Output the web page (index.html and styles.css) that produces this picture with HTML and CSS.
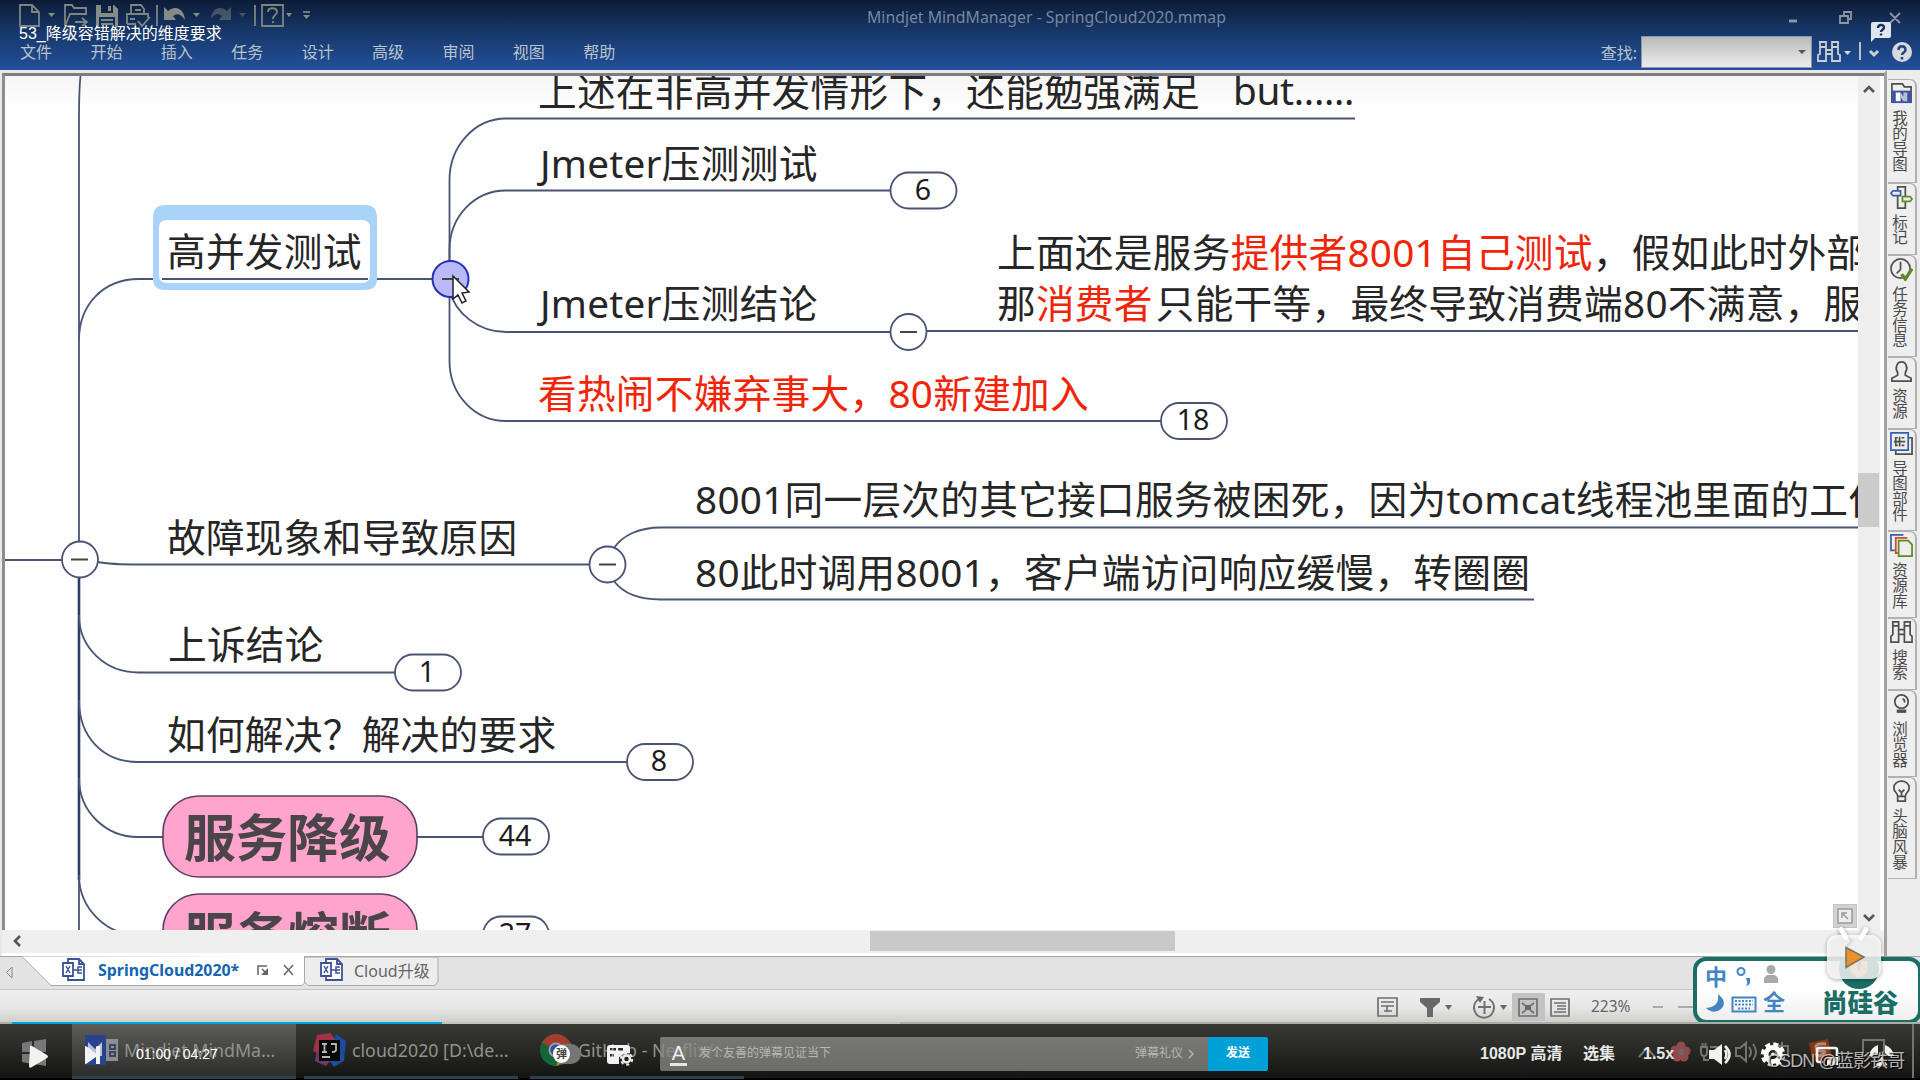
FILE: index.html
```html
<!DOCTYPE html>
<html lang="zh-CN">
<head>
    <meta charset="UTF-8">
    <meta name="viewport" content="width=device-width, initial-scale=1.0">
    <title>53_降级容错解决的维度要求</title>
    <link rel="stylesheet" href="styles.css">
</head>
<body>
<div class="screen">

    <!-- ribbon -->
    <header class="header">
        <div class="quickbar">
            <div class="quick-icons">
                <svg viewBox="18 0 26 30" width="26" height="30"><path d="M20 5h12l7 7v14H20zM32 5v7h7"/></svg>
                <svg viewBox="44 0 16 30" width="16" height="30"><path class="fill" d="M48 13h7l-3.500 4z"/></svg>
                <svg viewBox="60 0 32 30" width="32" height="30"><path d="M65 26V5h7l2 3h12v6M65 26l5-12h17M65 26h9M75 22h10M82 18l5 4-5 4"/></svg>
                <svg viewBox="92 0 30 30" width="30" height="30"><path class="fill" fill-rule="evenodd" d="M96 5h18l4 4v18H96zM101 5v8h12V5zm7 1h3v5h-3zM99 17v10h16V17z"/><path d="M101 20h12M101 24h12"/></svg>
                <svg viewBox="122 0 30 30" width="30" height="30"><path d="M131 14V5h10l3 4v5M127 24V14h21v4M127 24h9M135 10h6M130 19h5M138 21l4 5 8-9"/></svg>
                <svg viewBox="152 0 10 30" width="10" height="30"><path d="M157 5v21"/></svg>
                <svg viewBox="162 0 28 30" width="28" height="30"><path class="fill" d="M164 20V7l4 4c7-6 16-3 17 9-4-6-8-7-12-4l3 4z"/></svg>
                <svg viewBox="190 0 18 30" width="18" height="30"><path class="fill" d="M193 13h7l-3.500 4z"/></svg>
                <svg class="faded" viewBox="208 0 26 30" width="26" height="30"><path class="fill" d="M231 20V7l-4 4c-7-6-15-3-16 8 4-6 8-6 11-3l-3 4z"/></svg>
                <svg class="faded" viewBox="234 0 14 30" width="14" height="30"><path class="fill" d="M239 13h7l-3.500 4z"/></svg>
                <svg viewBox="248 0 12 30" width="12" height="30"><path d="M255 5v21"/></svg>
                <svg viewBox="260 0 26 30" width="26" height="30"><path d="M262 5h21v21h-21zM268 12c0-5 9-5 9 0 0 3-4 3-4 7M273 21v2"/></svg>
                <svg viewBox="286 0 30 30" width="30" height="30"><path class="fill" d="M286 13h6l-3 4zM303 15h7l-3.500 4z"/><path d="M303 12h7"/></svg>
            </div>
            <div class="app-title">Mindjet MindManager - SpringCloud2020.mmap</div>
            <svg class="window-buttons" viewBox="1780 0 140 34" width="140" height="34"><path d="M1789 21h8" stroke-width="3"/><path d="M1840 16h8v7h-8zM1844 16v-4h7v7h-3M1890 13l10 10M1900 13l-10 10"/></svg>
        </div>
        <div class="menubar">
            <nav class="menu">
                <span>文件</span><span>开始</span><span>插入</span><span>任务</span><span>设计</span><span>高级</span><span>审阅</span><span>视图</span><span>帮助</span>
            </nav>
            <div class="search">
                <label>查找:</label>
                <div class="search-box"><i class="caret"></i></div>
                <svg viewBox="1812 34 108 36" width="108" height="36">
                    <path d="M1820 42h6v5h-6zM1832 42h6v5h-6zM1820 47v7l-2 1v6h8V47M1838 47v7l2 1v6h-8V47M1826 50h6M1826 54h6M1860 42v18" />
                    <path class="fill" d="M1844 51h7l-3.500 4z"/>
                    <path d="M1870 51l4 4 4-4" stroke-width="3"/>
                    <circle class="fill" cx="1902" cy="52" r="10"/>
                    <path class="dark" d="M1898.500 50c0-5 7-5 7 0 0 2.500-3.500 2.500-3.500 5M1902 57v2.500"/>
                </svg>
            </div>
        </div>
    </header>

    <main class="workspace">
        <section class="document">
            <div class="map-row">
                <!-- mind map -->
                <svg class="map" viewBox="5 76 1853 854" width="1853" height="854">
                    <g class="link">
                        <path d="M80.500 76Q79 90 79 120V542M5 560H62M79 340C79 305 103 279 139 279H153M377 279H432"/>
                        <path class="trunk" d="M79 577V880"/><path d="M79 880V930"/>
                        <path d="M97 562Q110 564.500 140 564.500H589M79 615C79 648 106 672.500 138 672.500H395"/>
                        <path d="M79 700C79 737 103 762 138 762H627M79 778C79 812 106 837 138 837H163M417 837H483M79 875C79 908 106 935 138 935"/>
                        <path d="M449.500 262V180C449.500 147 474 118.500 506 118.500H1355"/>
                        <path d="M449.500 262V250C449.500 217 474 190.500 506 190.500H890"/>
                        <path d="M449.500 290C455 313 478 332 506 332H890"/>
                        <path d="M449.500 297V361C449.500 394 474 421 506 421H1161"/>
                        <path d="M926 331H1858M614 548C622 536 638 527.500 661 527.500H1858M614 581C622 592 638 599.500 661 599.500H1534"/>
                    </g>

                    <path class="selection" fill-rule="evenodd" d="M165 205H365Q377 205 377 218V279Q377 290 365 290H165Q153 290 153 279V218Q153 205 165 205ZM167 220Q159 220 159 228V275Q159 283 167 283H362Q370 283 370 275V228Q370 220 362 220Z"/>
                    <path class="link" d="M162 279H368"/>

                    <g class="knob">
                        <circle cx="80" cy="559.500" r="18"/><path d="M71 559.500h17"/>
                        <circle cx="607.500" cy="564.500" r="18"/><path d="M599 564.500h17"/>
                        <circle cx="908.500" cy="332" r="18"/><path d="M900 332h17"/>
                        <circle class="hot" cx="450.500" cy="279" r="18"/><path d="M442 279h17"/>
                    </g>

                    <g class="topic">
                        <text x="167" y="266">高并发测试</text>
                        <text x="538" y="106">上述在非高并发情形下，还能勉强满足</text>
                        <text class="tight" x="1233" y="105">but......</text>
                        <text x="540" y="178">Jmeter压测测试</text>
                        <text x="540" y="318">Jmeter压测结论</text>
                        <text class="red" x="538" y="408">看热闹不嫌弃事大，80新建加入</text>
                        <text x="997" y="267">上面还是服务<tspan class="red">提供者8001自己测试</tspan>，假如此时外部</text>
                        <text x="997" y="318">那<tspan class="red">消费者</tspan><tspan dx="3">只能干等，最终导致消费端80不满意，服</tspan></text>
                        <text x="167" y="552">故障现象和导致原因</text>
                        <text x="695" y="514">8001同一层次的其它接口服务被困死，因为tomcat线程池里面的工作</text>
                        <text x="695" y="587">80此时调用8001，客户端访问响应缓慢，转圈圈</text>
                        <text x="168" y="659">上诉结论</text>
                        <text x="167" y="749">如何解决？解决的要求</text>
                    </g>

                    <g class="pink">
                        <rect x="163" y="796" width="254" height="81" rx="36"/>
                        <text x="184" y="857">服务降级</text>
                        <rect x="163" y="894" width="254" height="81" rx="36"/>
                        <text x="184" y="955">服务熔断</text>
                    </g>

                    <g class="count">
                        <rect x="890.500" y="172.500" width="66" height="36" rx="18"/><text x="923" y="200">6</text>
                        <rect x="1161" y="403" width="66" height="36" rx="18"/><text x="1193" y="430">18</text>
                        <rect x="395" y="654.500" width="66" height="36" rx="18"/><text x="427" y="682">1</text>
                        <rect x="627" y="744" width="66" height="36" rx="18"/><text x="659" y="771">8</text>
                        <rect x="483" y="818.500" width="66" height="36" rx="18"/><text x="515" y="846">44</text>
                        <rect x="483" y="916.500" width="66" height="36" rx="18"/><text x="515" y="944">27</text>
                    </g>

                    <path class="cursor" d="M453 276v23l5-4 4 8 4-2-4-8 7-1z"/>
                </svg>
                <div class="vscroll">
                    <svg viewBox="0 0 12 8" width="12" height="8"><path d="M1 7l5-5 5 5"/></svg>
                    <div class="vthumb"></div>
                    <svg viewBox="0 0 12 8" width="12" height="8"><path d="M1 1l5 5 5-5"/></svg>
                </div>
                <div class="corner"><svg viewBox="0 0 22 22" width="22" height="22"><path d="M4 4h14v14H4zM8 13V8h5M8 8l6 6"/></svg></div>
            </div>
            <div class="hscroll">
                <svg viewBox="0 0 8 12" width="8" height="12"><path d="M7 1L2 6l5 5"/></svg>
                <div class="hthumb"></div>
                <svg viewBox="0 0 8 12" width="8" height="12"><path d="M1 1l5 5-5 5"/></svg>
            </div>
        </section>

        <!-- task pane tabs -->
        <aside class="side">
            <div class="side-tab" style="height:104px">
                <svg viewBox="0 0 24 24"><path d="M2 21V2h11l2 3h7v16z"/><path class="blue-fill" d="M2 9h20v13H2z"/><path class="white-fill" d="M6 11h5v9H6z"/><path class="pale-fill" d="M11 11l3 4v-4h4v9h-4l-3-4z"/></svg>
                <span>我的导图</span>
            </div>
            <div class="side-tab" style="height:72px">
                <svg viewBox="0 0 24 24"><path d="M8 1h8v22H8z"/><path class="blue" d="M1 7.500l2-2.500h8v5H3z"/><path class="green" d="M23 13.500l-2-2.500h-8v5h8z"/></svg>
                <span>标记</span>
            </div>
            <div class="side-tab" style="height:102px">
                <svg viewBox="0 0 24 24"><circle cx="11" cy="11" r="10"/><path d="M11 4v8l-4 4"/><path class="green thick" d="M12 17l4 5 7-11"/></svg>
                <span>任务信息</span>
            </div>
            <div class="side-tab" style="height:72px">
                <svg viewBox="0 0 24 24"><path d="M8 13C5 9 7 2 12 2s7 7 4 11v3l6 3v3H2v-3l6-3z"/></svg>
                <span>资源</span>
            </div>
            <div class="side-tab" style="height:102px">
                <svg viewBox="0 0 24 24"><path d="M19 6h4v17H6v-4"/><path class="blue" d="M1 1h18v18H1z"/><path d="M4 10h12M8 6H6v8h2M12 6h3M12 14h3M10 5v10"/></svg>
                <span>导图部件</span>
            </div>
            <div class="side-tab" style="height:87px">
                <svg viewBox="0 0 24 24"><path class="blue" d="M14 1H1v16h4"/><path class="orange" d="M18 4H6v16h3"/><path class="green" d="M9 7h10l4 4v12H9z"/></svg>
                <span>资源库</span>
            </div>
            <div class="side-tab" style="height:72px">
                <svg viewBox="0 0 24 24"><path d="M3 1h6v4H3zM15 1h6v4h-6zM3 5v9l-2 2v6h8V5M21 5v9l2 2v6h-8V5M9 9h6M9 14h6"/></svg>
                <span>搜索</span>
            </div>
            <div class="side-tab" style="height:87px">
                <svg viewBox="0 0 24 24"><circle cx="12" cy="9" r="7"/><path d="M13 6q3 1 2 4"/><path class="thick" d="M7 19h10"/></svg>
                <span>浏览器</span>
            </div>
            <div class="side-tab" style="height:102px">
                <svg viewBox="0 0 24 24"><path d="M8 17c0-4-4-4-4-9 0-9 16-9 16 0 0 5-4 5-4 9zM8 17v5h8v-5M9 10l3 3 3-3M12 13v4"/></svg>
                <span>头脑风暴</span>
            </div>
        </aside>
    </main>

    <div class="doc-tabs">
        <svg class="tabs-shape" viewBox="0 956 440 34" width="440" height="34">
            <path class="tab-on" d="M22 956.500L51 985.500H302L304.500 983V956"/>
            <path class="tab-off" d="M304.500 957V982L308 985.500H435L438 982V957z"/>
            <path class="tab-arrow" d="M12 967v11l-5.500-5.500z"/>
            <path class="tab-tools" d="M258 975v-9h9M262 969l5 5M284 965l9 10M293 965l-9 10"/><path class="tool-fill" d="M268 968v7h-7z"/>
        </svg>
        <div class="tab-list">
            <div class="tab active"><svg viewBox="0 0 23 23" width="23" height="23"><path d="M6 5V1h11l5 5v16H6v-4M17 1v5h5M1 5h10v13H1z"/><path class="thin" d="M4 8l4 7M8 8l-4 7M11 12h5M20 9h-4v6h4M16 12h4"/></svg><span>SpringCloud2020*</span></div>
            <div class="tab"><svg viewBox="0 0 23 23" width="23" height="23"><path d="M6 5V1h11l5 5v16H6v-4M17 1v5h5M1 5h10v13H1z"/><path class="thin" d="M4 8l4 7M8 8l-4 7M11 12h5M20 9h-4v6h4M16 12h4"/></svg><span>Cloud升级</span></div>
        </div>
    </div>

    <div class="status">
        <svg viewBox="1370 991 210 32" width="210" height="32">
            <path class="pressed" d="M1512 993h33v28h-33z"/>
            <path d="M1378 998h19v18h-19zM1381 1002h13M1381 1006h6v6M1387 1006h7M1384 1011h8"/>
            <path class="fill" d="M1420 998h20v4l-7 6v9h-6v-9l-7-6zM1445 1005h7l-3.500 5zM1500 1005h7l-3.500 5z"/>
            <path d="M1489 999A10 10 0 1 1 1479 999M1478 1007h13M1484.500 1001v13" stroke-width="2"/>
            <path class="fill" d="M1476 996l8 1-4 6z"/>
            <path d="M1519 999h18v17h-18zM1522 1003l4 3M1534 1003l-4 3M1522 1013l4-3M1534 1013l-4-3"/><path class="fill" d="M1525 1005h6v5h-6z"/>
            <path d="M1551 999h18v17h-18zM1554 1003h12M1557 1006h9M1557 1009h9M1554 1012h12"/>
        </svg>
        <span class="zoom">223%</span>
        <i class="dash"></i><i class="track"></i>
    </div>

    <!-- desktop taskbar -->
    <div class="taskbar">
        <svg class="start" viewBox="0 1024 72 54" width="72" height="54"><path d="M22 1043l10-2v11H22zM34 1041l12-2v13H34zM22 1054h10v10l-10-2zM34 1054h12v12l-12-2z"/></svg>
        <div class="task current"><svg viewBox="0 0 34 34" width="34" height="34"><path fill="#26438c" d="M0 2h21v30H0z"/><path fill="#8b8e94" d="M21 6h12v22H21z"/><path stroke="#39445d" stroke-width="2" fill="none" d="M25 12h5v4h-5zM25 19h5v4h-5z"/><path fill="#b7c0d6" d="M3 23V9l7 7 7-7v14h-4v-6l-3 3-3-3v6z"/></svg><span>Mindjet MindMa...</span></div>
        <div class="task"><svg viewBox="0 0 34 34" width="34" height="34"><path fill="#a03345" d="M4 2l13-2 7 8-12 17L0 18z"/><path fill="#1e4b9c" d="M23 1l10 7-2 20-10 6-6-8z"/><path fill="#713768" d="M4 18l-2 10 11 5 7-8z"/><path fill="#080808" d="M6 7h21v21H6z"/><path stroke="#b5b5b5" stroke-width="1.800" fill="none" d="M9 11h5M11.500 11v8M9 19h5M18 11h5v6q0 2-4 2M9 24h8"/></svg><span>cloud2020 [D:\de...</span></div>
        <div class="task"><svg viewBox="0 0 36 36" width="34" height="34"><circle cx="18" cy="18" r="17" fill="#14663a"/><path fill="#a63c2b" d="M3 10Q9 1 18 1t15 9L18 18z"/><path fill="#ab8a23" d="M33 10q7 15-15 25l7-17z"/><circle cx="18" cy="18" r="8" fill="#9aa4b0"/><circle cx="18" cy="18" r="6" fill="#2c5795"/></svg><span>GitHub - Netflix/...</span></div>
        <svg class="tray" viewBox="1630 1024 290 54" width="290" height="54">
            <path d="M1639 1057l8-9 8 9M1701 1047h6v5q0 4-3 4t-3-4zM1702.500 1043v4M1705.500 1043v4M1704 1056v4h5M1710 1047h10v10h-10M1736 1048h4l6-5v18l-6-5h-4zM1749 1047q4 5 0 10M1753 1044q6 8 0 16M1776 1046h12v9h-12zM1782 1042v18M1863 1040h21v16h-21zM1913 1024v54"/>
            <g fill="#8f4b4c" stroke="none"><circle cx="1681" cy="1046" r="4.500"/><circle cx="1686" cy="1051" r="4.500"/><circle cx="1684" cy="1057" r="4.500"/><circle cx="1677" cy="1057" r="4.500"/><circle cx="1675" cy="1050" r="4.500"/></g><circle cx="1681" cy="1052" r="3" fill="#6e6470" stroke="none"/>
            <path fill="#8c3612" stroke="none" d="M1809 1043l19-4 4 19-19 4z"/><path stroke="#a98c7d" stroke-width="3" d="M1826 1044q-10-1-10 3t6 4-2 5l-5-1"/>
        </svg>
    </div>

    <!-- floating input method bar -->
    <div class="ime">
        <svg viewBox="1697 961 219 59" width="219" height="59">
            <text class="ime-char" x="1705" y="985">中</text>
            <circle class="ring" cx="1741" cy="971.500" r="3.500"/><path class="ime-fill" d="M1746 978h4v4q0 3-4 4 2-2 1-4z"/>
            <g fill="#a9a9a9"><circle cx="1771" cy="969.500" r="4.500"/><path d="M1764 983v-5l3-3h8l3 3v5z"/></g>
            <path class="ime-fill" d="M1718 994q10 8 3 15-7 6-15-1 14-1 12-14z"/>
            <path class="ring" d="M1732.500 997.500h23v14h-23z"/><path class="keys" d="M1735 1001h18M1735 1004.500h18M1738 1008.500h12"/>
            <text class="ime-char" x="1763" y="1010">全</text>
            <circle cx="1859" cy="969" r="20" fill="#1b6e66"/><path stroke="#f3a03c" stroke-width="7" fill="none" d="M1854 956v14q5 7 10 0v-14"/>
            <text class="brand" x="1822" y="1012">尚硅谷</text>
        </svg>
    </div>
    <svg class="tv" viewBox="1820 924 68 62" width="68" height="62">
        <path class="tv-body" d="M1841 929.500l5 8M1866 929.500l-5 8"/>
        <rect x="1827" y="935" width="54" height="44" rx="9" fill="#fff" fill-opacity=".82"/>
        <path fill="#e9922b" stroke="#77735f" stroke-width="1.500" d="M1846 947.500l18 9.500-18 10.500z"/>
    </svg>

    <!-- video player overlay -->
    <div class="video-title">53_降级容错解决的维度要求</div>
    <svg class="feedback" viewBox="0 0 20 20" width="20" height="20"><path fill="#dfe5ed" d="M2 0h16q2 0 2 2v12q0 2-2 2H4l-4 4V2q0-2 2-2z"/><path stroke="#17325f" stroke-width="2.400" fill="none" d="M7 6c0-4 6-4 6-.5 0 2.500-3 2-3 4.500M10 11.500v2"/></svg>

    <div class="player">
        <div class="progress"><div class="played"></div><div class="buffered"></div></div>
        <div class="controls">
            <svg viewBox="0 1024 124 54" width="124" height="54"><path class="w" d="M30 1045q0-2 2-1l15 9q2 1.500 0 3l-15 9q-3 2-3-1zM85 1045q0-1 1-1l10 7v-6q0-1 2-1h2v18h-4v-7l-10 7q-1 0-1-1z"/></svg>
            <span class="time">01:00 / 04:27</span>
            <div class="toggle"><b>弹</b></div>
            <svg class="dm-set" viewBox="606 1042 30 25" width="30" height="25"><path class="w" fill-rule="evenodd" d="M611 1045h17q3 0 3 3v5h-5l-6 4v7h-9q-3 0-3-3v-13q0-3 3-3zM611 1048v2.500h6V1048zm8 0v2.500h5V1048zM611 1054v2.500h4V1054z"/><circle cx="627.500" cy="1059" r="3.500" fill="none" stroke="#eee" stroke-width="2.500"/><circle cx="627.500" cy="1059" r="5.700" fill="none" stroke="#eee" stroke-width="2" stroke-dasharray="3 2.970"/></svg>
            <div class="sendbox">
                <span class="letter">A</span>
                <span class="hint">发个友善的弹幕见证当下</span>
                <span class="manners">弹幕礼仪</span>
                <svg viewBox="0 0 6 10" width="6" height="10"><path d="M1 1l4 4-4 4"/></svg>
            </div>
            <div class="send">发送</div>
            <div class="right">
                <span class="quality">1080P 高清</span>
                <span class="list">选集</span>
                <span class="speed">1.5x</span>
            </div>
            <svg viewBox="1700 1024 210 54" width="210" height="54">
                <path class="w" d="M1709 1048h5l8-6v21l-8-6h-5z"/><path class="ws" d="M1725 1048q3 4.500 0 9M1725 1044q9 8.500 0 17"/>
                <circle cx="1773" cy="1052.500" r="7" fill="none" stroke="#fff" stroke-width="5"/><circle cx="1773" cy="1052.500" r="10.500" fill="none" stroke="#fff" stroke-width="3.500" stroke-dasharray="5 3.250"/><circle class="w" cx="1773" cy="1052.500" r="2"/>
                <path class="ws" stroke-width="3" d="M1823 1060h-4q-2 0-2-2v-10q0-2 2-2h16q2 0 2 2v6"/><path class="w" d="M1827 1055h11v8h-11z"/>
                <path class="w" d="M1878 1043v8l-3 3h-6q1-8 9-11zM1885 1043v8l3 3h6q-1-8-9-11zM1881.500 1054l6 9q-6 3-12 0z"/>
            </svg>
        </div>
    </div>
    <div class="watermark">CSDN @蓝影铁哥</div>
</div>
</body>
</html>
```
FILE: styles.css
```css
* { box-sizing: border-box; }
body {
    margin: 0;
    background: #000;
    font-family: "Noto Sans", "Noto Sans CJK SC", sans-serif;
}
svg { display: block; flex: none; }
.screen {
    position: relative;
    width: 1920px;
    height: 1080px;
    overflow: hidden;
    display: flex;
    flex-direction: column;
}

/* ribbon */
.header { height: 70px; flex: none; background: linear-gradient(#0c1c37, #173769 45%, #22509a); color: #b9c3cb; }
.quickbar { height: 34px; display: flex; justify-content: space-between; position: relative; }
.quick-icons { display: flex; padding-left: 18px; }
.header svg { fill: none; stroke: #7d8580; stroke-width: 1.8; }
.header svg .fill { fill: #858c88; stroke: none; }
.header .faded { opacity: .45; }
.app-title { position: absolute; left: 867px; top: 5px; font-size: 15.800px; line-height: 24px; color: #78869c; white-space: nowrap; }
.header .window-buttons { stroke: #8d979f; }
.menubar { height: 36px; display: flex; justify-content: space-between; align-items: center; }
.menu { display: flex; gap: 38.400px; padding-left: 20px; font-size: 16px; line-height: 36px; }
.search { display: flex; align-items: center; font-size: 16px; }
.search label { padding-right: 4px; }
.search-box { width: 171px; height: 32px; border: 1px solid #8a97aa; background: linear-gradient(#b9babb, #ececec); display: flex; align-items: center; justify-content: flex-end; padding-right: 5px; }
.caret { border: 4px solid transparent; border-top-color: #555; border-bottom: 0; }
.header .search svg { stroke: #c8d0d4; }
.header .search svg .fill { fill: #d5dade; }
.header .search svg .dark { stroke: #23457f; stroke-width: 2.5; }

/* workspace */
.workspace { height: 886px; flex: none; display: flex; background: #ededed; }
.document { width: 1887px; border: 3px solid #e8e8ea; border-width: 3px 3px 0 2px; border-right-color: #a2a2a2; background: #fff; }
.map-row { height: 857px; display: flex; border-top: 3px solid #807b80; border-left: 3px solid #8d8d8d; position: relative; }
.map { background: linear-gradient(#f5f5f5, #fefefe 30px); }
.link { fill: none; stroke: #4a5575; stroke-width: 1.8; }
.trunk { stroke: #2c3f62; stroke-width: 2.6; }
.selection { fill: #aad3f9; }
.knob circle { fill: #fff; stroke: #4b5274; stroke-width: 1.8; }
.knob path { stroke: #444; stroke-width: 2; }
.knob .hot { fill: #babafa; stroke: #2730b8; stroke-width: 2; }
.topic text { font-size: 38.700px; letter-spacing: .25px; fill: #262626; }
.topic .tight { letter-spacing: -.3px; }
.topic .red { fill: #f02408; }
.pink rect { fill: #ffa5cd; stroke: #5b3c67; stroke-width: 1.6; }
.pink text { font-size: 51.700px; font-weight: bold; fill: #4b4549; }
.count rect { fill: #fff; stroke: #4b5274; stroke-width: 1.8; }
.count text { font-size: 28.500px; text-anchor: middle; fill: #1c1c1c; }
.cursor { fill: #fff; stroke: #222; stroke-width: 1.5; }
.vscroll { width: 22px; background: #eee; display: flex; flex-direction: column; align-items: center; padding: 9px 1px 8px 0; }
.vscroll svg, .hscroll svg { fill: none; stroke: #555; stroke-width: 2.6; }
.vthumb { width: 21px; height: 54px; background: #cbcbcb; margin: 380px 0 auto; }
.corner { position: absolute; left: 1828px; top: 828px; background: #d2d2d2; border: 1px solid #c4c4c4; }
.corner svg { fill: #eee; stroke: #999; stroke-width: 1.5; }
.hscroll { height: 23px; background: #efefef; display: flex; align-items: center; padding: 0 0 2px 11px; }
.hthumb { width: 305px; height: 20px; margin: 0 671px 0 849px; background: #c9c9c9; }

.side { width: 33px; padding: 9px 0 0 1px; }
.side-tab { width: 29px; border: 1px solid #b0b0b0; border-left: 0; border-width: 1px 2px 1px 0; border-top-right-radius: 7px; background: #eeeeee; padding: 2px 0 0 2px; display: flex; flex-direction: column; }
.side-tab svg { width: 23px; height: 23px; fill: none; stroke: #505050; stroke-width: 1.8; }
.side-tab span { writing-mode: vertical-rl; font-size: 15.500px; line-height: 20px; width: 20px; margin-top: 5px; margin-left: -1px; color: #4b4b4b; }
.side-tab .blue { stroke: #3560b2; fill: #eee; }
.side-tab .green { stroke: #5b8d20; fill: #eee; }
.side-tab .orange { stroke: #cf4c25; fill: #eee; }
.side-tab .thick { stroke-width: 3.5; fill: none; }
.side-tab .blue-fill { fill: #3a55a8; stroke: none; }
.side-tab .white-fill { fill: #fff; stroke: none; }
.side-tab .pale-fill { fill: #b9bfd0; stroke: none; }

/* document tabs */
.doc-tabs { position: relative; height: 34px; flex: none; background: #e3e3e3; border-top: 1px solid #a5a5a5; border-bottom: 1px solid #c7c7c7; }
.tabs-shape { position: absolute; left: 0; top: -1px; }
.tab-on { fill: #fff; stroke: #aaa; }
.tab-off { fill: #ededed; stroke: #aaa; }
.tab-arrow { fill: none; stroke: #888; }
.tab-tools { fill: none; stroke: #666; stroke-width: 1.5; }
.tool-fill { fill: #666; }
.tab-list { position: relative; display: flex; }
.tab { height: 25px; width: 134px; padding-left: 16px; display: flex; align-items: center; gap: 11px; font-size: 16px; color: #666; white-space: nowrap; }
.tab.active { width: 304px; padding-left: 62px; gap: 13px; color: #1465b2; font-weight: bold; font-size: 15.900px; }
.tab svg { fill: #fff; stroke: #3c539a; stroke-width: 1.8; }
.tab .thin { stroke-width: 1.5; fill: none; }

.status { height: 34px; flex: none; display: flex; align-items: center; padding-left: 1370px; background: linear-gradient(#efefef, #e5e5e5 55%, #cbccc8); color: #666; font-size: 15.500px; }
.status svg { fill: none; stroke: #707070; stroke-width: 1.7; }
.status .fill { fill: #686868; stroke: none; }
.status .pressed { fill: #c3c3c3; stroke: none; }
.zoom { margin-left: 11px; margin-top: -2px; width: 62px; }
.dash { width: 10px; height: 2px; background: #aaa; }
.track { width: 30px; height: 2px; background: #aaa; margin-left: 15px; }

/* taskbar */
.taskbar { height: 56px; flex: none; display: flex; background: linear-gradient(#3a3a35, #141412 96%, #000 97%); color: #92928e; font-size: 17.800px; }
.start { fill: #777; }
.task { width: 214px; height: 55px; margin-right: 12px; padding: 0 0 0 9px; display: flex; align-items: center; gap: 5px; border-bottom: 3px solid #2c4252; white-space: nowrap; }
.task.current { width: 224px; margin-right: 8px; padding-left: 13px; background: linear-gradient(#5d5d59, #2c2c2a); }
.tray { margin-left: auto; fill: none; stroke: #73736f; stroke-width: 2; }

.ime { position: absolute; left: 1693px; top: 957px; width: 229px; height: 67px; border: 4px solid #1b6e66; border-radius: 13px; background: linear-gradient(#fff 50%, #eee); }
.ime-char { font-size: 22px; font-weight: bold; fill: #4385c4; }
.ime-fill { fill: #4385c4; }
.ring { fill: none; stroke: #4385c4; stroke-width: 2; }
.keys { stroke: #4385c4; stroke-width: 2; stroke-dasharray: 2 1.5; }
.brand { font-size: 25.500px; font-weight: 900; fill: #1b6e66; }
.tv { position: absolute; left: 1820px; top: 924px; filter: drop-shadow(0 1px 2px rgba(0, 0, 0, .4)); }
.tv-body { stroke: #fff; stroke-width: 5; stroke-linecap: round; }

/* player overlay */
.video-title { position: absolute; left: 19px; top: 22px; color: #fff; font: 16px/24px "Liberation Sans", "Noto Sans CJK SC", sans-serif; white-space: nowrap; }
.feedback { position: absolute; left: 1871px; top: 22px; }
.player { position: absolute; left: 0; right: 0; top: 1022px; height: 56px; font-family: "Liberation Sans", "Noto Sans CJK SC", sans-serif; }
.progress { height: 2px; padding-left: 12px; display: flex; background: #a9ada6; }
.played { width: 430px; background: #00a1d6; }
.buffered { width: 458px; background: #c2c4be; }
.controls { height: 54px; margin-top: 3px; display: flex; align-items: center; color: #e8e8e8; }
.controls > svg { margin-top: -3px; }
.w { fill: #f2f2f2; }
.ws { fill: none; stroke: #f2f2f2; stroke-width: 2.6; }
.time { margin-left: 12px; width: 417px; font-size: 14px; color: #fff; margin-top: -1px; }
.toggle { width: 28px; height: 20px; border-radius: 10px; background: #757575; }
.toggle b { display: block; width: 17px; height: 18px; margin: 1px 0; border-radius: 50%; background: #fff; color: #444; font-size: 11px; line-height: 18px; text-align: center; }
.controls > .dm-set { margin: 0 25px 0 24px; }
.sendbox { width: 548px; height: 34px; border-radius: 2px 0 0 2px; background: linear-gradient(rgba(146, 146, 143, .72), rgba(124, 124, 121, .85)); display: flex; align-items: center; padding: 0 14px 0 10px; font-size: 12px; line-height: 16px; color: #b7b7b5; }
.letter { width: 17px; height: 24px; border-bottom: 3px solid #e5e5e5; color: #eee; font-size: 20px; line-height: 22px; text-align: center; }
.hint { margin-left: 12px; margin-top: -2px; }
.manners { margin-left: auto; margin-right: 5px; margin-top: -2px; }
.sendbox svg { fill: none; stroke: #bbb; stroke-width: 1.3; }
.send { width: 60px; height: 34px; border-radius: 0 2px 2px 0; background: #00a1d6; color: #fff; font-size: 12px; font-weight: bold; line-height: 33px; text-align: center; }
.right { width: 432px; padding-left: 212px; margin-top: -5px; display: flex; align-items: baseline; font-size: 16px; font-weight: bold; white-space: nowrap; }
.quality { width: 103px; }
.list { width: 60px; }
.watermark { position: absolute; left: 1767px; top: 1048px; color: rgba(225, 225, 225, .8); font: 18px/26px "Liberation Sans", "Noto Sans CJK SC", sans-serif; letter-spacing: -.9px; text-shadow: 1px 1px 1px #000; white-space: nowrap; }
```
